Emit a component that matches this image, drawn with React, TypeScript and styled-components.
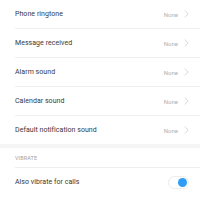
import React from 'react'
import styled, {createGlobalStyle} from 'styled-components'

const GlobalStyle = createGlobalStyle`
  html, body {
    margin: 0;
    padding: 0;
    background: #ffffff;
  }
  body {
    font-family: Roboto, "Noto Sans", "Liberation Sans", sans-serif;
    -webkit-font-smoothing: antialiased;
  }
`

const Screen = styled.div`
  width: 200px;
  height: 200px;
  overflow: hidden;
  background: #ffffff;
  display: flex;
  flex-direction: column;
`

const Group = styled.div`
  display: flex;
  flex-direction: column;
`

// divider is inset from the left, runs to the right edge
const Row = styled.div`
  height: 28px;
  margin-left: 15px;
  padding-right: 11px;
  display: flex;
  align-items: center;
  border-bottom: ${(props: { last?: boolean }) => props.last ? 'none' : '1px solid #efefef'};
`

const Title = styled.span`
  flex: 1;
  font-size: 7px;
  color: #383838;
  letter-spacing: 0.05px;
`

const Value = styled.span`
  font-size: 6px;
  color: #b0b0b0;
  margin-right: 6px;
`

const Chevron = styled.svg`
  width: 5px;
  height: 8px;
  display: block;
`

const Band = styled.div`
  height: 4px;
  background: #f5f5f5;
`

const Section = styled.div`
  height: 20px;
  box-sizing: border-box;
  padding-top: 1px;
  margin-left: 15px;
  display: flex;
  align-items: center;
  border-bottom: 1px solid #efefef;
  font-size: 5.5px;
  color: #a3a3a3;
  letter-spacing: 0.1px;
`

const Track = styled.div`
  width: 21px;
  height: 13px;
  box-sizing: border-box;
  border: 1px solid #ececec;
  border-radius: 7px;
  background: #ffffff;
  display: flex;
  align-items: center;
  justify-content: ${(props: { on: boolean }) => props.on ? 'flex-end' : 'flex-start'};
  padding: 0 1px;
`

const Knob = styled.div`
  width: 9px;
  height: 9px;
  border-radius: 50%;
  background: #2f9cf6;
`

const sounds = [
  'Phone ringtone',
  'Message received',
  'Alarm sound',
  'Calendar sound',
  'Default notification sound',
]

const ChevronIcon = () => (
  <Chevron viewBox="0 0 5 8">
    <path d="M0.8 0.6 L4.2 4 L0.8 7.4" fill="none" stroke="#c6c6c6" strokeWidth="0.7" />
  </Chevron>
)

const App = () => (
  <Screen>
    <GlobalStyle />
    <Group>
      {sounds.map((s, i) => (
        <Row key={s} last={i === sounds.length - 1}>
          <Title>{s}</Title>
          <Value>None</Value>
          <ChevronIcon />
        </Row>
      ))}
    </Group>
    <Band />
    <Section>VIBRATE</Section>
    <Row last>
      <Title>Also vibrate for calls</Title>
      <Track on>
        <Knob />
      </Track>
    </Row>
  </Screen>
)

export default App
